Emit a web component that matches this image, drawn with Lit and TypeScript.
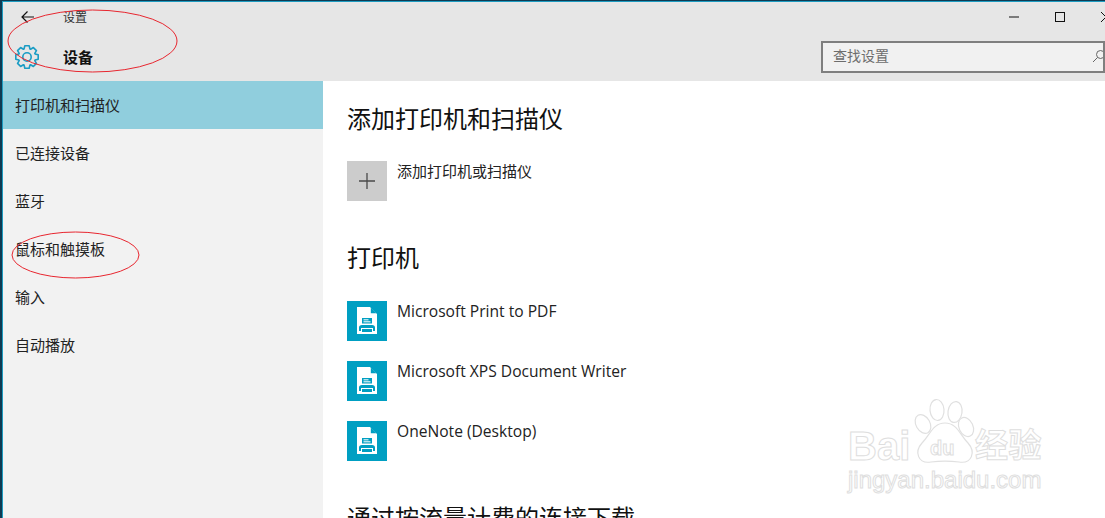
import { LitElement, html, css, svg } from "lit";
import { customElement } from "lit/decorators.js";

const gearPath = (() => {
  const c = 13;
  const pts: string[] = [];
  const teeth = 8;
  for (let i = 0; i < teeth; i++) {
    const a = (i / teeth) * Math.PI * 2 - Math.PI / 2;
    const step = (Math.PI * 2) / teeth;
    const spec: [number, number][] = [
      [-0.5, 8.6],
      [-0.27, 11.4],
      [0.27, 11.4],
      [0.5, 8.6],
    ];
    for (const [off, r] of spec) {
      const t = a + off * step * 0.9;
      pts.push(`${(c + Math.cos(t) * r).toFixed(2)} ${(c + Math.sin(t) * r).toFixed(2)}`);
    }
  }
  return "M" + pts.join("L") + "Z";
})();

const printerIcon = svg`<svg width="40" height="40" viewBox="0 0 40 40">
  <rect width="40" height="40" fill="#009fc2"/>
  <path d="M10 6H23L30 13V33H10Z" fill="#fff"/>
  <path d="M23.8 6.5L29.5 12.2H23.8Z" fill="#009fc2"/>
  <rect x="15" y="17" width="10" height="5.5" fill="#009fc2"/>
  <rect x="16.5" y="18.3" width="5" height="1" fill="#fff"/>
  <rect x="16.5" y="20.3" width="7" height="1" fill="#fff"/>
  <path d="M12 30V26.5Q12 24 15 24H25Q28 24 28 26.5V30H26V27H14V30Z" fill="#009fc2"/>
  <rect x="15" y="28" width="10" height="3" fill="#009fc2"/>
</svg>`;

@customElement("app-root")
export class AppRoot extends LitElement {
  static styles = css`
    :host {
      display: block;
      width: 1105px;
      height: 518px;
      overflow: hidden;
      position: relative;
      background: #0f3a52;
      font-family: "Open Sans", "Noto Sans CJK SC", sans-serif;
      color: #1a1a1a;
    }
    .window {
      margin: 1px 0 0 2px;
      height: 517px;
      display: flex;
      flex-direction: column;
      background: #fff;
      border-top: 1px solid #1d9bc0;
      border-left: 1px solid #1d9bc0;
      box-sizing: border-box;
      overflow: hidden;
    }
    .cjk { font-family: "Noto Sans CJK SC", sans-serif; }
    .header {
      height: 79px;
      flex: none;
      background: #e6e6e6;
      display: grid;
      grid-template-columns: 1fr auto;
      grid-template-rows: 30px 49px;
    }
    .nav {
      display: flex;
      align-items: center;
      padding-left: 18px;
      gap: 29px;
      font-size: 12px;
      color: #333;
    }
    .nav svg { display: block; }
    .nav span { margin-top: -2px; }
    .controls {
      display: flex;
      align-items: center;
      justify-content: flex-end;
      height: 30px;
    }
    .ctl {
      width: 46px;
      display: flex;
      justify-content: center;
    }
    .ctl.close { width: 22px; justify-content: flex-start; padding-left: 18px; box-sizing: border-box; overflow: hidden; }
    .ctl svg { flex: none; }
    .title {
      display: flex;
      align-items: center;
      height: 26px;
      margin-top: 12px;
      padding-left: 11px;
      gap: 23px;
      font-size: 15px;
      font-weight: 700;
      color: #111;
    }
    .title span { margin-top: -2px; }
    .search {
      margin: 9px 0 0;
      width: 284px;
      height: 32px;
      box-sizing: border-box;
      border: 2px solid #7f7f7f;
      background: #f1f1f1;
      display: flex;
      align-items: center;
      justify-content: space-between;
      padding: 0 0 0 10px;
      font-size: 14px;
      color: #6d6d6d;
      overflow: hidden;
    }
    .search span { margin-top: -4px; }
    .search svg { flex: none; margin-right: -3px; margin-top: -2px; }
    .body {
      flex: 1;
      display: flex;
      min-height: 0;
    }
    .side {
      width: 320px;
      flex: none;
      background: #f2f2f2;
      display: flex;
      flex-direction: column;
    }
    .item {
      height: 48px;
      flex: none;
      display: flex;
      align-items: center;
      padding: 0 0 2px 12px;
      box-sizing: border-box;
      font-size: 15px;
      color: #222;
    }
    .item.sel { background: #90cedd; }
    .main {
      flex: 1;
      padding: 0 0 0 24px;
      background: #fff;
      overflow: hidden;
    }
    h2 {
      margin: 0;
      font-size: 24px;
      font-weight: 400;
      line-height: 32px;
      color: #111;
      font-family: "Noto Sans CJK SC", sans-serif;
    }
    .h1 { padding-top: 21px; }
    .h2 { padding-top: 40px; }
    .h3 { padding-top: 40px; }
    .row {
      display: flex;
      gap: 10px;
      height: 40px;
      margin-top: 20px;
      font-size: 15.6px;
      color: #222;
      line-height: 20px;
    }
    .row.first { margin-top: 28px; }
    .row.add { margin-top: 27px; }
    .row svg { display: block; flex: none; }
    .label.zh { font-size: 15px; }
    .plus {
      width: 40px;
      height: 40px;
      flex: none;
      background: #cccccc;
      display: flex;
      align-items: center;
      justify-content: center;
    }
    .ring {
      position: absolute;
      left: 0;
      top: 0;
      pointer-events: none;
    }
    .mark {
      position: absolute;
      left: 848px;
      top: 398px;
      width: 200px;
      height: 100px;
      color: #fff;
      -webkit-text-stroke: 1px #dedede;
      font-family: "Liberation Sans", "Noto Sans CJK SC", sans-serif;
      pointer-events: none;
    }
    .mark svg { position: absolute; left: 0; top: 0; }
    .bai {
      position: absolute;
      left: 0;
      top: 28px;
      font-size: 40px;
      font-weight: 700;
      line-height: 40px;
    }
    .du {
      position: absolute;
      left: 82px;
      top: 40px;
      font-size: 20px;
      font-weight: 700;
      line-height: 20px;
    }
    .jy {
      position: absolute;
      left: 127px;
      top: 29px;
      font-size: 33px;
      font-weight: 700;
      line-height: 32px;
      white-space: nowrap;
      letter-spacing: 0.5px;
      font-family: "Noto Sans CJK SC", sans-serif;
    }
    .url {
      position: absolute;
      left: 0;
      top: 70px;
      font-size: 24px;
      line-height: 24px;
      white-space: nowrap;
      font-weight: 400;
    }
  `;

  render() {
    return html`
      <div class="window">
        <div class="header">
          <div class="nav cjk">
            <svg width="13" height="12" viewBox="0 0 13 12">
              <path d="M13 6H1M6.5 .5L1 6L6.5 11.5" fill="none" stroke="#111" stroke-width="1.2"/>
            </svg>
            <span>设置</span>
          </div>
          <div class="controls">
            <div class="ctl">
              <svg width="10" height="10" viewBox="0 0 10 10"><path d="M0 5H10" stroke="#111" stroke-width="1"/></svg>
            </div>
            <div class="ctl">
              <svg width="10" height="10" viewBox="0 0 10 10"><rect x=".5" y=".5" width="9" height="9" fill="none" stroke="#111"/></svg>
            </div>
            <div class="ctl close">
              <svg width="10" height="10" viewBox="0 0 10 10"><path d="M0 0L10 10M10 0L0 10" stroke="#111" stroke-width="1"/></svg>
            </div>
          </div>
          <div class="title cjk">
            <svg width="26" height="26" viewBox="0 0 26 26">
              <path fill="none" stroke="#1a9cc4" stroke-width="1.6" stroke-linejoin="round" d="${gearPath}"/>
              <circle cx="13" cy="13" r="4.2" fill="none" stroke="#1a9cc4" stroke-width="1.6"/>
            </svg>
            <span>设备</span>
          </div>
          <div class="search cjk">
            <span>查找设置</span>
            <svg width="14" height="14" viewBox="0 0 14 14">
              <circle cx="8.5" cy="5.5" r="4" fill="none" stroke="#666" stroke-width="1"/>
              <path d="M5.5 8.5L1 13" stroke="#666" stroke-width="1"/>
            </svg>
          </div>
        </div>
        <div class="body">
          <nav class="side cjk">
            <div class="item sel">打印机和扫描仪</div>
            <div class="item">已连接设备</div>
            <div class="item">蓝牙</div>
            <div class="item">鼠标和触摸板</div>
            <div class="item">输入</div>
            <div class="item">自动播放</div>
          </nav>
          <main class="main">
            <h2 class="h1">添加打印机和扫描仪</h2>
            <div class="row add">
              <div class="plus">
                <svg width="16" height="16" viewBox="0 0 16 16"><path d="M8 0V16M0 8H16" stroke="#4a4a4a" stroke-width="1.3"/></svg>
              </div>
              <div class="label zh cjk">添加打印机或扫描仪</div>
            </div>
            <h2 class="h2">打印机</h2>
            <div class="row first">${printerIcon}<div class="label">Microsoft Print to PDF</div></div>
            <div class="row">${printerIcon}<div class="label">Microsoft XPS Document Writer</div></div>
            <div class="row">${printerIcon}<div class="label">OneNote (Desktop)</div></div>
            <h2 class="h3">通过按流量计费的连接下载</h2>
          </main>
        </div>
      </div>
      <svg class="ring" width="1105" height="518" viewBox="0 0 1105 518">
        <ellipse cx="92.5" cy="41" rx="84.5" ry="31" fill="none" stroke="#e8262f" stroke-width="1"/>
        <ellipse cx="75.5" cy="255" rx="63.5" ry="23" fill="none" stroke="#e8262f" stroke-width="1"/>
      </svg>
      <div class="mark">
        <svg width="200" height="100" viewBox="0 0 200 100">
          <g fill="#fff" stroke="#e0e0e0" stroke-width="1.2">
            <ellipse cx="89" cy="12" rx="7" ry="10.5" transform="rotate(-5 89 12)"/>
            <ellipse cx="107" cy="14" rx="7" ry="10.5" transform="rotate(8 107 14)"/>
            <ellipse cx="75" cy="26" rx="7" ry="10" transform="rotate(-30 75 26)"/>
            <ellipse cx="118" cy="29" rx="7" ry="10" transform="rotate(-25 118 29)"/>
            <path d="M97 25C109 25 112 37 120 45C128 54 124 66 111 64C103 63 91 63 83 64C70 66 66 54 74 45C82 37 85 25 97 25Z"/>
          </g>
        </svg>
        <span class="bai">Bai</span>
        <span class="du">du</span>
        <span class="jy">经验</span>
        <span class="url">jingyan.baidu.com</span>
      </div>
    `;
  }
}
